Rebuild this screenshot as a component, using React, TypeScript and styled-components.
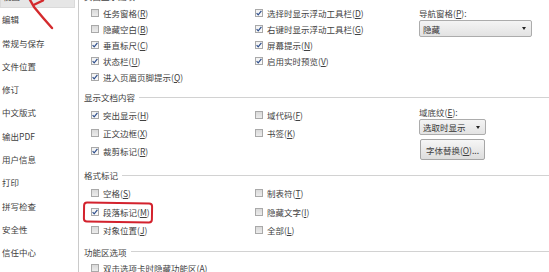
import React from "react";
import styled, { createGlobalStyle } from "styled-components";

const Global = createGlobalStyle`
  html, body { margin: 0; padding: 0; background: #ffffff; overflow: hidden; }
  body { font-family: "Noto Sans CJK SC", "Noto Sans", sans-serif; }
`;

const Window = styled.div`
  position: relative;
  display: flex;
  width: 549px;
  height: 272px;
  overflow: hidden;
  background: #ffffff;
  color: #414141;
  font-size: 8.5px;
`;

const Sidebar = styled.div`
  width: 78px;
  flex-shrink: 0;
  border-right: 1px solid #cacaca;
  box-sizing: content-box;
`;

const NavList = styled.div`
  display: flex;
  flex-direction: column;
  margin-top: -15px;
`;

const NavItem = styled.div<{ $active?: boolean }>`
  height: 23.3px;
  width: 75px;
  padding-left: 2px;
  box-sizing: border-box;
  white-space: nowrap;
  background: ${(p) => (p.$active ? "#e6e6e6" : "transparent")};
  border: ${(p) => (p.$active ? "1px solid #dadada" : "none")};
  line-height: ${(p) => (p.$active ? "21.3px" : "23.3px")};
`;

const Panel = styled.div`
  flex: 1;
  display: flex;
  flex-direction: column;
  padding-left: 5px;
  margin-top: -10px;
  min-width: 0;
`;

const Section = styled.div<{ $after: number }>`
  display: flex;
  flex-direction: column;
  margin-bottom: ${(p) => p.$after}px;
`;

const HeaderRow = styled.div`
  display: flex;
  align-items: center;
  gap: 4px;
  height: 12px;
  line-height: 12px;
  white-space: nowrap;
`;

const Rule = styled.div`
  flex: 1;
  height: 1px;
  background: #d2d2d2;
`;

const Body = styled.div`
  display: grid;
  grid-template-columns: 164px 164px 1fr;
  padding-left: 7px;
  margin-top: 3px;
`;

const Col = styled.div<{ $top?: number }>`
  display: flex;
  flex-direction: column;
  padding-top: ${(p) => p.$top ?? 0}px;
`;

const Row = styled.div<{ $h: number }>`
  position: relative;
  display: flex;
  align-items: center;
  gap: 4px;
  height: ${(p) => p.$h}px;
  white-space: nowrap;
`;

const Box = styled.span<{ $checked?: boolean }>`
  width: 8px;
  height: 8px;
  flex-shrink: 0;
  box-sizing: border-box;
  border: 1px solid #a9a9a9;
  background: ${(p) =>
    p.$checked ? "linear-gradient(#f2f2f2, #fbfbfb)" : "linear-gradient(#d9d9d9, #ececec)"};
  display: flex;
  align-items: center;
  justify-content: center;
`;

const FieldLabel = styled.div`
  height: 12px;
  line-height: 12px;
  white-space: nowrap;
`;

const Select = styled.div<{ $w: number; $h: number }>`
  position: relative;
  margin-top: 1px;
  width: ${(p) => p.$w}px;
  height: ${(p) => p.$h}px;
  box-sizing: border-box;
  border: 1px solid #acacac;
  border-radius: 2px;
  background: linear-gradient(#f4f4f4, #e3e3e3);
  display: flex;
  align-items: center;
  padding-left: 3px;
  color: #333333;
`;

const Caret = styled.span`
  margin-left: auto;
  margin-right: 5px;
  width: 0;
  height: 0;
  border-left: 2.5px solid transparent;
  border-right: 2.5px solid transparent;
  border-top: 3px solid #222;
`;

const Button = styled.div`
  margin-top: 4px;
  margin-left: 1px;
  width: 65px;
  height: 21px;
  box-sizing: border-box;
  border: 1px solid #a6a6a6;
  border-radius: 2px;
  background: linear-gradient(#f6f6f6, #dddddd);
  display: flex;
  align-items: center;
  justify-content: center;
  white-space: nowrap;
`;

const RedBox = styled.div`
  position: absolute;
  left: -8px;
  top: -1px;
  width: 70px;
  height: 21px;
  box-sizing: border-box;
  border: 2px solid #d3222d;
  border-radius: 4px;
  transform: rotate(0.8deg);
  pointer-events: none;
`;

const ArrowMark = styled.svg`
  position: absolute;
  left: 0;
  top: 0;
  width: 60px;
  height: 35px;
  pointer-events: none;
`;

const Check = () => (
  <svg width="6" height="6" viewBox="0 0 6 6">
    <path d="M0.6 3.1 L2.2 4.8 L5.4 0.8" fill="none" stroke="#2f4f8c" strokeWidth="1.2" />
  </svg>
);

type Opt = { label: string; key: string; checked?: boolean; mark?: boolean };

const Label = ({ label, k, tail = "" }: { label: string; k: string; tail?: string }) => (
  <span>
    {label}(<u>{k}</u>){tail}
  </span>
);

const CheckRow = ({ o, h }: { o: Opt; h: number }) => (
  <Row $h={h}>
    <Box $checked={o.checked}>{o.checked && <Check />}</Box>
    <Label label={o.label} k={o.key} />
    {o.mark && <RedBox />}
  </Row>
);

const nav = [
  "视图",
  "编辑",
  "常规与保存",
  "文件位置",
  "修订",
  "中文版式",
  "输出PDF",
  "用户信息",
  "打印",
  "拼写检查",
  "安全性",
  "信任中心",
];

const s1a: Opt[] = [
  { label: "任务窗格", key: "R" },
  { label: "隐藏空白", key: "B" },
  { label: "垂直标尺", key: "C", checked: true },
  { label: "状态栏", key: "U", checked: true },
  { label: "进入页眉页脚提示", key: "Q", checked: true },
];
const s1b: Opt[] = [
  { label: "选择时显示浮动工具栏", key: "D", checked: true },
  { label: "右键时显示浮动工具栏", key: "G", checked: true },
  { label: "屏幕提示", key: "N", checked: true },
  { label: "启用实时预览", key: "V", checked: true },
];
const s2a: Opt[] = [
  { label: "突出显示", key: "H", checked: true },
  { label: "正文边框", key: "X" },
  { label: "裁剪标记", key: "R", checked: true },
];
const s2b: Opt[] = [
  { label: "域代码", key: "F" },
  { label: "书签", key: "K" },
];
const s3a: Opt[] = [
  { label: "空格", key: "S" },
  { label: "段落标记", key: "M", checked: true, mark: true },
  { label: "对象位置", key: "J" },
];
const s3b: Opt[] = [
  { label: "制表符", key: "T" },
  { label: "隐藏文字", key: "I" },
  { label: "全部", key: "L" },
];
const s4a: Opt[] = [{ label: "双击选项卡时隐藏功能区", key: "A" }];

const Header = ({ title }: { title: string }) => (
  <HeaderRow>
    <span>{title}</span>
    <Rule />
  </HeaderRow>
);

export default function App() {
  return (
    <>
      <Global />
      <Window>
        <Sidebar>
          <NavList>
            {nav.map((n, i) => (
              <NavItem key={n} $active={i === 0}>
                {n}
              </NavItem>
            ))}
          </NavList>
        </Sidebar>
        <Panel>
          <Section $after={6}>
            <Header title="页面显示选项" />
            <Body>
              <Col>
                {s1a.map((o) => (
                  <CheckRow key={o.label} o={o} h={16} />
                ))}
              </Col>
              <Col>
                {s1b.map((o) => (
                  <CheckRow key={o.label} o={o} h={16} />
                ))}
              </Col>
              <Col $top={2}>
                <FieldLabel>
                  <Label label="导航窗格" k="P" tail=":" />
                </FieldLabel>
                <Select $w={113} $h={17}>
                  隐藏
                  <Caret />
                </Select>
              </Col>
            </Body>
          </Section>
          <Section $after={9}>
            <Header title="显示文档内容" />
            <Body>
              <Col>
                {s2a.map((o) => (
                  <CheckRow key={o.label} o={o} h={18} />
                ))}
              </Col>
              <Col>
                {s2b.map((o) => (
                  <CheckRow key={o.label} o={o} h={18} />
                ))}
              </Col>
              <Col>
                <FieldLabel>
                  <Label label="域底纹" k="E" tail=":" />
                </FieldLabel>
                <Select $w={67} $h={16}>
                  选取时显示
                  <Caret />
                </Select>
                <Button>
                  <Label label="字体替换" k="O" tail="..." />
                </Button>
              </Col>
            </Body>
          </Section>
          <Section $after={6}>
            <Header title="格式标记" />
            <Body>
              <Col>
                {s3a.map((o) => (
                  <CheckRow key={o.label} o={o} h={18.5} />
                ))}
              </Col>
              <Col>
                {s3b.map((o) => (
                  <CheckRow key={o.label} o={o} h={18.5} />
                ))}
              </Col>
            </Body>
          </Section>
          <Section $after={0}>
            <Header title="功能区选项" />
            <Body>
              <Col>
                {s4a.map((o) => (
                  <CheckRow key={o.label} o={o} h={15} />
                ))}
              </Col>
            </Body>
          </Section>
        </Panel>
        <ArrowMark viewBox="0 0 60 35">
          <path
            d="M52 28 Q43 18 34 7 L29.5 -1 M33.5 5 L43 0.5"
            fill="none"
            stroke="#d42a2d"
            strokeWidth="2.4"
            strokeLinecap="round"
            strokeLinejoin="round"
          />
        </ArrowMark>
      </Window>
    </>
  );
}
